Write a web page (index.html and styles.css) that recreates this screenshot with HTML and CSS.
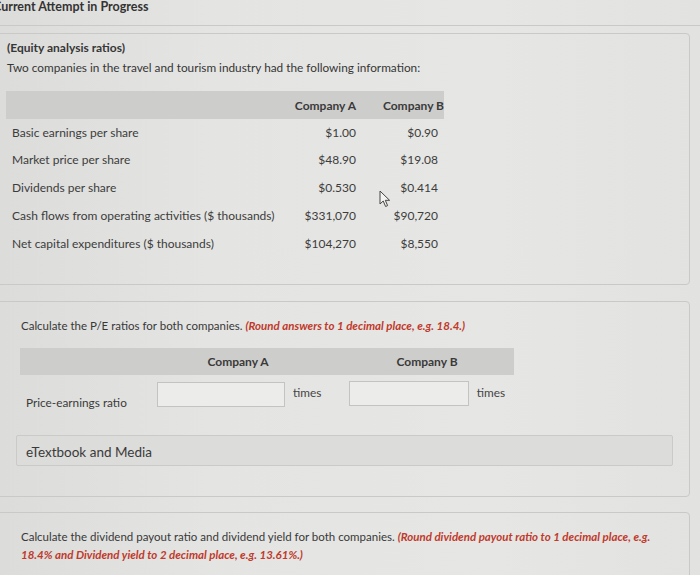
FILE: index.html
```html
<!DOCTYPE html>
<html>
<head>
<meta charset="utf-8">
<link rel="stylesheet" href="styles.css">
</head>
<body>
<div class="page">
  <div class="attempt">Current Attempt in Progress</div>

  <section class="box box-info">
    <p class="q-title">(Equity analysis ratios)</p>
    <p class="q-desc">Two companies in the travel and tourism industry had the following information:</p>
    <table class="data">
      <thead>
        <tr><th class="lbl"></th><th class="ca">Company A</th><th class="cb">Company B</th></tr>
      </thead>
      <tbody>
        <tr><td class="lbl">Basic earnings per share</td><td class="ca">$1.00</td><td class="cb">$0.90</td></tr>
        <tr><td class="lbl">Market price per share</td><td class="ca">$48.90</td><td class="cb">$19.08</td></tr>
        <tr><td class="lbl">Dividends per share</td><td class="ca">$0.530</td><td class="cb">$0.414</td></tr>
        <tr><td class="lbl">Cash flows from operating activities ($ thousands)</td><td class="ca">$331,070</td><td class="cb">$90,720</td></tr>
        <tr><td class="lbl">Net capital expenditures ($ thousands)</td><td class="ca">$104,270</td><td class="cb">$8,550</td></tr>
      </tbody>
    </table>
    <svg class="cursor" width="12" height="18" viewBox="0 0 12 18"><path d="M1 1 L1 14 L4.2 11 L6.6 16.5 L8.6 15.6 L6.3 10.3 L10.6 10.3 Z" fill="#f4f4f2" stroke="#444" stroke-width="1" stroke-linejoin="round"/></svg>
  </section>

  <section class="box box-pe">
    <p class="prompt">Calculate the P/E ratios for both companies. <em class="hint">(Round answers to 1 decimal place, e.g. 18.4.)</em></p>
    <div class="ans-head">
      <span class="h-lbl"></span>
      <span class="h-a">Company A</span>
      <span class="h-b">Company B</span>
    </div>
    <div class="ans-row">
      <span class="r-lbl">Price-earnings ratio</span>
      <span class="r-a"><span class="field field-a"></span><span class="unit">times</span></span>
      <span class="r-b"><span class="field field-b"></span><span class="unit">times</span></span>
    </div>
    <div class="etext">eTextbook and Media</div>
  </section>

  <section class="box box-div">
    <p class="prompt">Calculate the dividend payout ratio and dividend yield for both companies. <em class="hint">(Round dividend payout ratio to 1 decimal place, e.g. 18.4% and Dividend yield to 2 decimal place, e.g. 13.61%.)</em></p>
  </section>
</div>
</body>
</html>
```

FILE: styles.css
```css
html, body {
  margin: 0;
  padding: 0;
}
body {
  width: 700px;
  height: 575px;
  overflow: hidden;
  background: linear-gradient(90deg, #dcdcda 0%, #e4e4e2 30%, #e6e6e4 70%, #e2e2e0 100%);
  font-family: Lato, "Open Sans", "Liberation Sans", sans-serif;
  color: #363636;
}
.page {
  position: relative;
}
.attempt {
  font-weight: 700;
  font-size: 12.5px;
  line-height: 14px;
  margin-left: -7px;
  height: 25px;
  border-bottom: 1px solid #c9c9c7;
  color: #333;
}
.box {
  border: 1px solid #c9c9c7;
  border-radius: 4px;
  margin-left: -4px;
  width: 694px;
  box-sizing: border-box;
}
.box-info {
  position: relative;
  margin-top: 7px;
  height: 252px;
  padding: 6px 0 0 10px;
}
.q-title {
  margin: 0;
  font-weight: 700;
  font-size: 12px;
  line-height: 16px;
}
.q-desc {
  margin: 4px 0 0;
  font-size: 11.8px;
  line-height: 16px;
}
.data {
  margin-top: 15px;
  margin-left: -1px;
  border-collapse: collapse;
  width: 438px;
  table-layout: fixed;
  font-size: 12px;
}
.data th {
  background: #cdcdcb;
  height: 28px;
  font-weight: 700;
  padding: 0;
  color: #3a3a3a;
}
.data td {
  height: 28px;
  padding: 0;
  color: #3c3c3c;
}
.data tbody tr:first-child td {
  height: 26px;
}
.data .lbl {
  width: 270px;
  padding-left: 6px;
  text-align: left;
}
.data .ca {
  width: 74px;
  text-align: right;
  padding-right: 6px;
}
.data .cb {
  text-align: right;
  padding-right: 0;
}
.data td.cb {
  padding-right: 6px;
}
.cursor {
  position: absolute;
  left: 382px;
  top: 156px;
}
.box-pe {
  margin-top: 16px;
  height: 196px;
  padding: 15px 0 0 24px;
}
.prompt {
  margin: 0;
  font-size: 11.5px;
  line-height: 18px;
  color: #383838;
}
.hint {
  font-style: italic;
  font-weight: 700;
  color: #c0392b;
}
.ans-head {
  margin-top: 13px;
  display: grid;
  grid-template-columns: 137px 162px 186px;
  width: 494px;
  height: 27px;
  align-items: center;
  background: #cdcdcb;
  font-weight: 700;
  font-size: 12px;
  color: #3a3a3a;
  margin-left: -1px;
}
.h-a, .h-b {
  text-align: center;
}
.h-b {
  padding-left: 30px;
}
.ans-row {
  display: grid;
  grid-template-columns: 137px 192px 156px;
  width: 494px;
  margin-top: 7px;
  margin-left: -1px;
  align-items: start;
  font-size: 11.8px;
}
.r-lbl {
  padding-top: 13px;
  padding-left: 6px;
  color: #3a3a3a;
}
.r-a, .r-b {
  display: flex;
  gap: 8px;
  align-items: flex-start;
}
.field {
  display: block;
  height: 25px;
  background: #ececea;
  border: 1px solid #c3c3c1;
  box-sizing: border-box;
}
.field-a { width: 128px; }
.field-b { width: 123px; margin-top: -1px; }
.unit {
  padding-top: 3px;
  color: #444;
}
.etext {
  margin-top: 25px;
  margin-left: -5px;
  width: 657px;
  height: 31px;
  box-sizing: border-box;
  background: #dcdcda;
  border: 1px solid #cacac8;
  border-radius: 2px;
  padding: 8px 0 0 9px;
  font-size: 13.5px;
  line-height: 16px;
  color: #3a3a3a;
}
.box-div {
  margin-top: 15px;
  height: 80px;
  padding: 15px 0 0 24px;
}
.box-div .prompt {
  width: 630px;
}
```
